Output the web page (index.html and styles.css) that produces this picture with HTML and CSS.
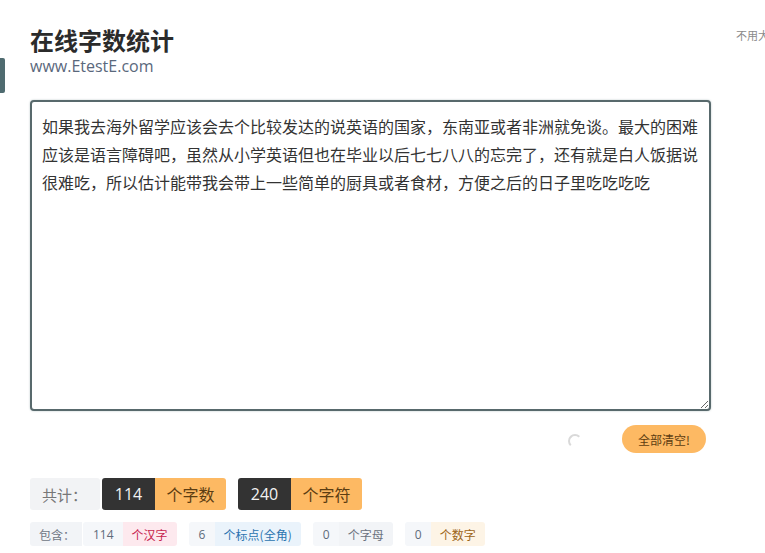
FILE: index.html
```html
<!DOCTYPE html>
<html>
<head>
  <meta charset="utf-8">
  <title>在线字数统计</title>
  <link rel="stylesheet" href="styles.css">
</head>
<body>
  <div class="side-tab"></div>
  <div class="top-note">不用大写转换</div>

  <div class="page">
    <h1 class="title">在线字数统计</h1>
    <div class="site">www.EtestE.com</div>

    <textarea class="editor">如果我去海外留学应该会去个比较发达的说英语的国家，东南亚或者非洲就免谈。最大的困难应该是语言障碍吧，虽然从小学英语但也在毕业以后七七八八的忘完了，还有就是白人饭据说很难吃，所以估计能带我会带上一些简单的厨具或者食材，方便之后的日子里吃吃吃吃</textarea>

    <div class="tools">
      <span class="spinner"></span>
      <button class="clear-button">全部清空!</button>
    </div>

    <div class="totals">
      <span class="total-label">共计：</span>
      <span class="group">
        <span class="num">114</span><span class="unit">个字数</span>
      </span>
      <span class="group">
        <span class="num">240</span><span class="unit">个字符</span>
      </span>
    </div>

    <div class="details">
      <span class="detail-label">包含：</span>
      <span class="chip">
        <span class="chip-num">114</span><span class="chip-unit hanzi">个汉字</span>
      </span>
      <span class="chip">
        <span class="chip-num">6</span><span class="chip-unit punct">个标点(全角)</span>
      </span>
      <span class="chip">
        <span class="chip-num">0</span><span class="chip-unit letter">个字母</span>
      </span>
      <span class="chip">
        <span class="chip-num">0</span><span class="chip-unit digit">个数字</span>
      </span>
    </div>
  </div>
</body>
</html>
```

FILE: styles.css
```css
html, body {
  margin: 0;
  height: 100%;
  overflow: hidden;
}
body {
  background: #fff;
  color: #333;
  font-family: "Open Sans", "Noto Sans CJK SC", sans-serif;
  position: relative;
}
.side-tab {
  position: absolute;
  left: 0;
  top: 58px;
  width: 5px;
  height: 35px;
  background: #4f6b70;
  border-radius: 0 2px 2px 0;
}
.top-note {
  position: absolute;
  left: 736px;
  top: 27px;
  font-size: 11px;
  color: #8a8a8a;
  white-space: nowrap;
  font-family: "Noto Sans CJK SC", sans-serif;
}
.page {
  width: 681px;
  padding: 26px 0 0 30px;
}
.title {
  margin: 0;
  font-size: 24px;
  line-height: 28px;
  font-weight: bold;
  color: #2b2b2b;
  font-family: "Noto Sans CJK SC", sans-serif;
}
.site {
  margin-top: 2px;
  font-size: 16px;
  line-height: 20px;
  color: #5a687c;
}
.editor {
  display: block;
  box-sizing: border-box;
  width: 681px;
  height: 311px;
  margin-top: 24px;
  padding: 10px 6px 10px 10px;
  border: 2px solid #58696c;
  border-radius: 4px;
  box-shadow: 0 0 2px rgba(90, 120, 125, 0.45);
  outline: none;
  font-family: "Noto Sans CJK SC", sans-serif;
  font-size: 16px;
  line-height: 28px;
  color: #333;
  resize: both;
}
.tools {
  display: flex;
  justify-content: flex-end;
  align-items: center;
  gap: 40px;
  margin-top: 14px;
  padding-right: 5px;
}
.spinner {
  width: 10px;
  height: 10px;
  border: 2px solid transparent;
  border-top-color: #d9d9d9;
  border-left-color: #d9d9d9;
  border-radius: 50%;
  margin-top: 4px;
}
.clear-button {
  width: 84px;
  height: 28px;
  border: none;
  border-radius: 14px;
  background: #fdb963;
  color: #5c3d12;
  font-family: "Noto Sans CJK SC", sans-serif;
  font-size: 12px;
  cursor: pointer;
  padding: 0;
}
.totals {
  display: flex;
  align-items: stretch;
  margin-top: 25px;
  height: 32px;
  font-size: 16px;
}
.total-label {
  display: flex;
  align-items: center;
  width: 70px;
  box-sizing: border-box;
  padding-left: 12px;
  background: #f2f3f5;
  color: #777;
  font-size: 15px;
  border-radius: 3px;
  font-family: "Noto Sans CJK SC", sans-serif;
  margin-right: 2px;
}
.group {
  display: flex;
  margin-right: 12px;
}
.num {
  display: flex;
  align-items: center;
  justify-content: center;
  width: 53px;
  background: #333;
  color: #f2f2f2;
  border-radius: 3px 0 0 3px;
}
.unit {
  display: flex;
  align-items: center;
  justify-content: center;
  width: 71px;
  background: #fdb963;
  color: #5c3d12;
  border-radius: 0 3px 3px 0;
  font-family: "Noto Sans CJK SC", sans-serif;
}
.details {
  display: flex;
  margin-top: 12px;
  height: 24px;
  font-size: 12px;
}
.detail-label {
  display: flex;
  align-items: center;
  width: 52px;
  box-sizing: border-box;
  padding-left: 9px;
  background: #f2f4f7;
  color: #6f7785;
  border-radius: 3px 0 0 3px;
  font-family: "Noto Sans CJK SC", sans-serif;
  margin-right: 1px;
}
.chip {
  display: flex;
  margin-right: 12px;
}
.chip-num {
  display: flex;
  align-items: center;
  padding: 0 9px 0 10px;
  min-width: 7px;
  background: #f5f7fa;
  color: #5f6b7a;
  border-radius: 3px 0 0 3px;
}
.chip-unit {
  display: flex;
  align-items: center;
  padding: 0 9px;
  border-radius: 0 3px 3px 0;
  font-family: "Noto Sans CJK SC", sans-serif;
}
.hanzi {
  background: #fde9ee;
  color: #c7254e;
}
.punct {
  background: #eaf3fb;
  color: #2b74b0;
}
.letter {
  background: #f2f4f7;
  color: #6b7280;
}
.digit {
  background: #fdf4e6;
  color: #9c6518;
}
```
